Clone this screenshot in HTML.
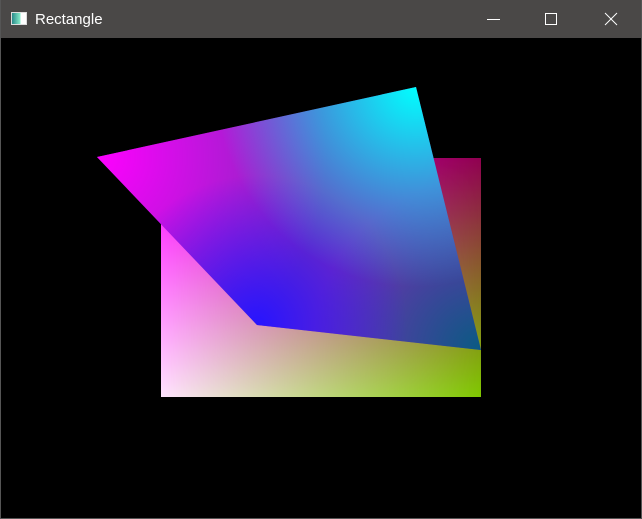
<html><head><style>
body{margin:0;width:642px;height:519px;background:#000;overflow:hidden;font-family:"Liberation Sans",sans-serif}
.tb{position:absolute;left:0;top:0;width:642px;height:38px;background:#4a4847}
.t{position:absolute;left:35px;top:11px;color:#fff;font-size:15px}
.ic{position:absolute;left:11px;top:12px;width:16px;height:13px;background:linear-gradient(90deg,#2a8a8a,#8ec 60%,#fff 61%);border:1px solid #ddd;box-sizing:border-box}
.r1,.r2{position:absolute;left:161px;top:158px;width:320px;height:239px}
.r1{background:linear-gradient(#ff00ff,#ffe4ff)}
.r2{background:linear-gradient(#900050,#80c800);-webkit-mask-image:linear-gradient(90deg,transparent,#000)}
.q{position:absolute;left:97px;top:87px;width:384px;height:263px;clip-path:polygon(0 70px,319px 0,384px 263px,160px 238px);
background:radial-gradient(circle at 319px 0,rgba(0,255,255,1) 0,rgba(0,255,255,0) 200px),
radial-gradient(circle at 160px 238px,rgba(40,20,255,1) 0,rgba(40,20,255,0) 150px),
radial-gradient(circle at 0 70px,rgba(255,0,255,1) 0,rgba(255,0,255,0) 230px),
radial-gradient(circle at 384px 263px,rgba(10,90,130,1) 0,rgba(10,90,130,0) 170px),#7a2cb8}
.bd{position:absolute;left:0;top:0;width:642px;height:519px;box-sizing:border-box;border:1px solid #555;border-top:none}
</style></head><body>
<div class="tb"><div class="ic"></div><div class="t">Rectangle</div>
<svg style="position:absolute;left:0;top:0" width="642" height="38"><g stroke="#fff" stroke-width="1" fill="none">
<line x1="487" y1="19.5" x2="500" y2="19.5"/><rect x="545.5" y="13.5" width="11" height="11"/>
<line x1="605" y1="13" x2="617" y2="25"/><line x1="617" y1="13" x2="605" y2="25"/></g></svg></div>
<div class="r1"></div><div class="r2"></div><div class="q"></div><div class="bd"></div>
</body></html>
